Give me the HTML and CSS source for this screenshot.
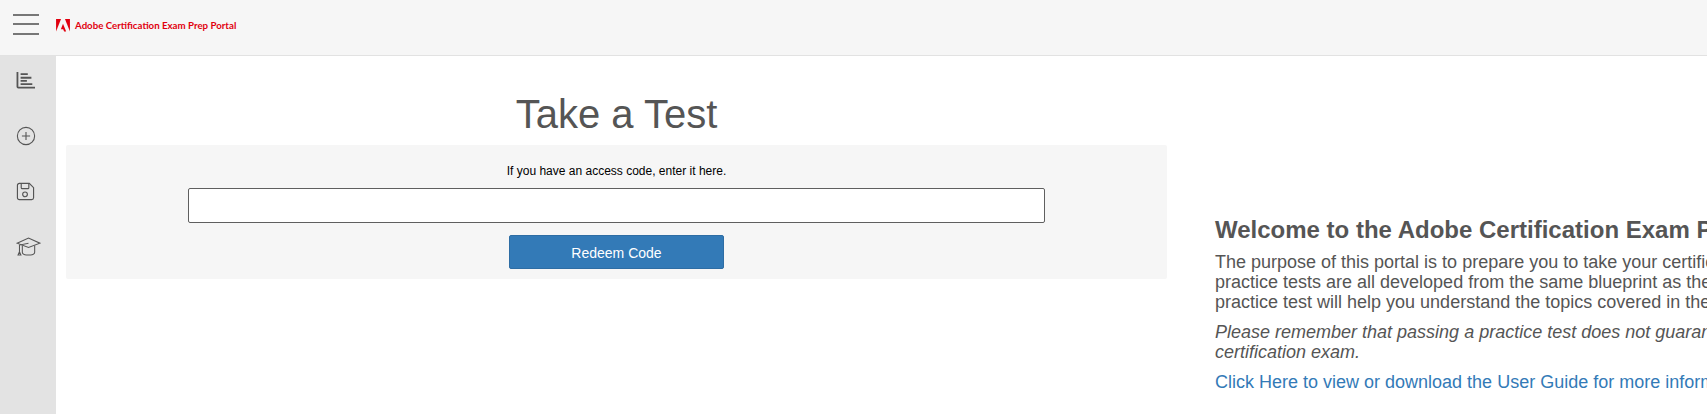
FILE: index.html
```html
<!DOCTYPE html>
<html lang="en">
<head>
  <meta charset="UTF-8" />
  <title>Adobe Certification Exam Prep Portal</title>
  <link rel="stylesheet" href="styles.css">
</head>
<body>

  <header class="top_bar">
    <button class="top_bar__menu" aria-label="Menu">
      <span></span><span></span><span></span>
    </button>
    <a class="brand" href="#">
      <svg class="brand__logo" viewBox="0 0 15 14" aria-hidden="true">
        <path d="M0 0h5.4L0 13.4z"/>
        <path d="M9.6 0H15v13.4z"/>
        <path d="M7.5 5l3.4 8.4H8.7L7.7 11H5.2z"/>
      </svg>
      <span class="brand__name">Adobe Certification Exam Prep Portal</span>
    </a>
  </header>

  <div class="page">
    <nav class="side_nav">
      <a class="side_nav__item" href="#" aria-label="Reports">
        <svg viewBox="0 0 22 20" width="20" height="18" fill="none" stroke="#555">
          <path d="M1.5 1v16.5a1 1 0 0 0 1 1H21" stroke-width="2"/>
          <path d="M5 3.500h8M5 7.500h12M5 11h7M5 14.500h13" stroke-width="2"/>
        </svg>
      </a>
      <a class="side_nav__item" href="#" aria-label="New test">
        <svg viewBox="0 0 22 22" width="20" height="20" fill="none" stroke="#555" stroke-width="1.200">
          <circle cx="11" cy="11" r="9.500"/>
          <path d="M11 6.500v9M6.500 11h9"/>
        </svg>
      </a>
      <a class="side_nav__item" href="#" aria-label="Saved tests">
        <svg viewBox="0 0 20 20" width="19" height="19" fill="none" stroke="#555" stroke-width="1.200">
          <path d="M3 1.500h11l4.500 4.500v10.500a2 2 0 0 1-2 2h-13a2 2 0 0 1-2-2v-13a2 2 0 0 1 2-2z"/>
          <path d="M5.500 1.500v4.500a1 1 0 0 0 1 1h6a1 1 0 0 0 1-1V1.500"/>
          <circle cx="9.500" cy="13" r="2.500"/>
        </svg>
      </a>
      <a class="side_nav__item" href="#" aria-label="Certification">
        <svg viewBox="0 0 26 20" width="25" height="19" fill="none" stroke="#555" stroke-width="1.100">
          <path d="M1 6.500 13 1l12 5.500L13 11z"/>
          <path d="M6.500 9v7c0 1.800 3 3 6.500 3s6.500-1.200 6.500-3V9"/>
          <path d="M13 6.500 3.500 8.500v7"/>
          <path d="M3.500 15.500 2 19h3z"/>
        </svg>
      </a>
    </nav>

    <main class="content">
      <section class="take_test">
        <h1 class="take_test__title">Take a Test</h1>
        <form class="code_form">
          <label class="code_form__label" for="code">If you have an access code, enter it here.</label>
          <input class="code_form__input" id="code" type="text">
          <button class="code_form__button" type="button">Redeem Code</button>
        </form>
      </section>

      <section class="welcome">
        <h2 class="welcome__title">Welcome to the Adobe Certification Exam Prep Portal</h2>
        <p>The purpose of this portal is to prepare you to take your certification exam. The<br>
          practice tests are all developed from the same blueprint as the actual exam. Taking a<br>
          practice test will help you understand the topics covered in the exam.</p>
        <p><em>Please remember that passing a practice test does not guarantee that you will pass the<br>
          certification exam.</em></p>
        <p><a href="#">Click Here to view or download the User Guide for more information.</a></p>
      </section>
    </main>
  </div>

</body>
</html>
```

FILE: styles.css
```css
/* reset */
html, body { margin:0; padding:0; height:100%; }
body {
  display:flex; flex-direction:column;
  overflow:hidden;
  background:#fff;
  font-family:"Liberation Sans", Arial, sans-serif;
  color:#555;
}

/* top bar */
.top_bar {
  display:flex;
  align-items:center;
  flex:none;
  height:55px;
  background:#f6f6f6;
  border-bottom:1px solid #e2e2e2;
}
.top_bar__menu {
  display:flex;
  flex-direction:column;
  gap:7.5px;
  width:26px;
  margin:-7px 0 0 13px;
  padding:0;
  border:0;
  background:none;
}
.top_bar__menu span {
  display:block;
  height:2px;
  background:#777;
}
.brand {
  display:flex;
  align-items:center;
  gap:5px;
  margin:-5px 0 0 17px;
  text-decoration:none;
}
.brand__logo { width:14px; height:13px; fill:#e1000f; }
.brand__name {
  font-family:Lato, sans-serif;
  font-size:9.700px;
  font-weight:700;
  color:#e1000f;
}

/* main layout */
.page { display:flex; flex:1; min-height:0; }
.side_nav {
  display:flex;
  flex-direction:column;
  flex:none;
  gap:31.5px;
  width:56px;
  padding-top:12px;
  box-sizing:border-box;
  background:#e3e3e3;
}
.side_nav__item {
  display:flex;
  align-items:center;
  height:24px;
  padding-left:16px;
  line-height:0;
}
.content { display:flex; flex:none; gap:48px; }

/* take a test */
.take_test { width:1101px; margin-left:10px; }
.take_test__title {
  margin:28px 0 0;
  font-size:40px;
  font-weight:400;
  line-height:61px;
  text-align:center;
}
.code_form {
  display:flex;
  flex-direction:column;
  align-items:center;
  height:134px;
  box-sizing:border-box;
  padding-top:19px;
  background:#f6f6f6;
  border-radius:2px;
}
.code_form__label {
  font-size:12px;
  line-height:14px;
  color:#000;
}
.code_form__input {
  width:857px;
  height:35px;
  margin-top:10px;
  box-sizing:border-box;
  background:#fff;
  border:1px solid #5f5f5f;
  border-radius:2px;
}
.code_form__button {
  width:215px;
  height:34px;
  margin-top:12px;
  padding-top:2px;
  font-family:inherit;
  font-size:14px;
  color:#fff;
  background:#337ab7;
  border:1px solid #2e6da4;
  border-radius:2px;
}

/* welcome text */
.welcome { width:1100px; padding-top:159px; }
.welcome__title {
  margin:0 0 8px;
  font-size:24px;
  line-height:29px;
}
.welcome p {
  margin:0 0 10px;
  font-size:18px;
  line-height:20px;
}
.welcome a { color:#337ab7; text-decoration:none; }
```
